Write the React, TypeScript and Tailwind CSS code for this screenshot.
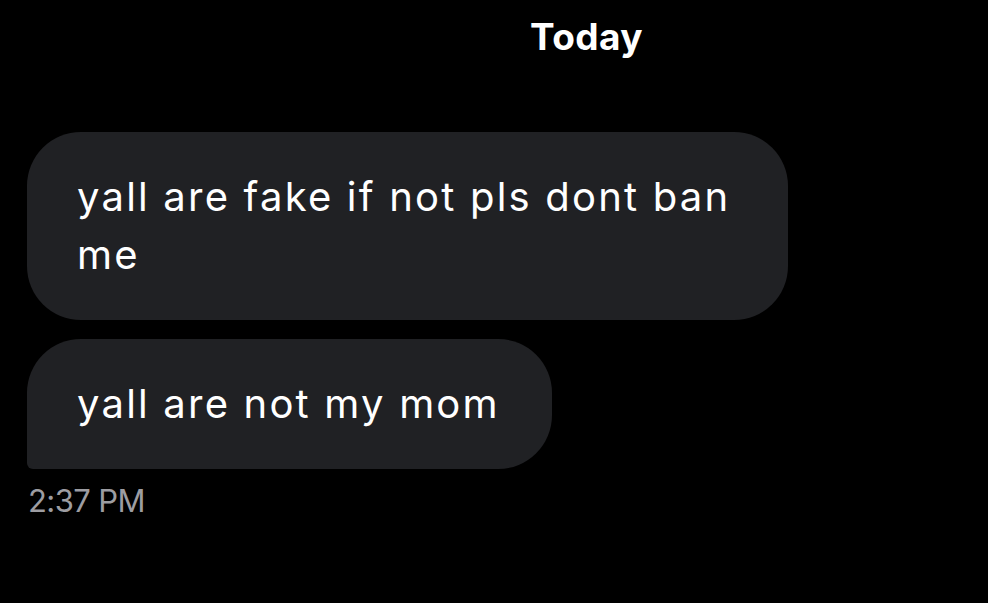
const messages = ['yall are fake if not pls dont ban me', 'yall are not my mom']

export default function App() {
  return (
    <div className="h-[603px] w-[988px] overflow-hidden bg-black font-['Inter',sans-serif] text-white">
      <div className="pl-[530px] pt-[12px] text-[37px] font-bold leading-[50px] tracking-[0.4px]">Today</div>

      <div className="mt-[70px] flex flex-col items-start gap-[19px] pl-[27px]">
        {messages.map((msg, i) => (
          <div
            key={msg}
            className={
              i === messages.length - 1
                ? 'max-w-[761px] rounded-[54px] rounded-bl-[6px] bg-[#202124] py-[36px] pl-[50px] pr-[52px] text-[40px] leading-[58px] tracking-[2.2px]'
                : 'max-w-[761px] rounded-[54px] bg-[#202124] py-[36px] pl-[50px] pr-[46px] text-[40px] leading-[58px] tracking-[2.2px]'
            }
          >
            {msg}
          </div>
        ))}
      </div>

      <div className="mt-[12px] pl-[28px] text-[31px] leading-[40px] tracking-[-0.6px] text-[#9d9da2]">2:37 PM</div>
    </div>
  )
}
